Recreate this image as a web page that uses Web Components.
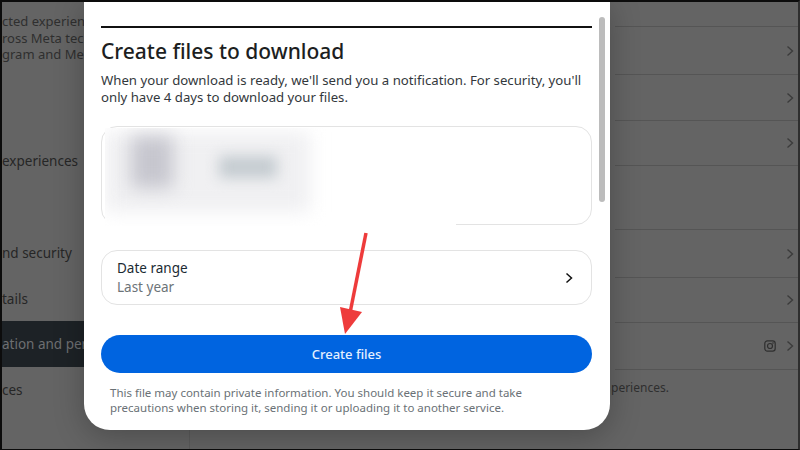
<!DOCTYPE html>
<html lang="en">
  <head>
    <meta charset="UTF-8" />
    <title>Create files to download</title>
    <style>
      html, body {
        margin: 0;
        height: 100%;
        overflow: hidden;
        background: #000;
      }
      body {
        font-family: "Noto Sans", "Liberation Sans", sans-serif;
      }
    </style>
  </head>
  <body>
    <template id="settings-page">
      <style>
        :host {
          display: block;
          position: relative;
          box-sizing: border-box;
          width: 800px;
          height: 450px;
          border-top: 2px solid #0c0c0c;
          border-left: 2px solid #0c0c0c;
          border-right: 2px solid #2e2e2e;
          border-bottom: 1px solid #0c0c0c;
          overflow: hidden;
          background: #646464;
        }
        .columns {
          display: grid;
          grid-template-columns: 188px 1fr;
          height: 100%;
        }
        .side {
          border-right: 1px solid #5b5b5b;
        }
      </style>
      <div class="columns">
        <div class="side"><slot name="side"></slot></div>
        <div><slot name="main"></slot></div>
      </div>
      <slot></slot>
    </template>

    <template id="side-item">
      <style>
        :host {
          display: flex;
          align-items: center;
          height: var(--h, 46px);
          margin-top: var(--top, 0);
          white-space: nowrap;
          font-size: 13.5px;
          color: #262626;
        }
        :host([selected]) {
          background: #1d2226;
          color: #6d6f71;
        }
      </style>
      <slot></slot>
    </template>

    <template id="side-intro">
      <style>
        :host {
          display: block;
          padding-top: 11px;
          height: 100px;
          box-sizing: border-box;
          white-space: nowrap;
          font-size: 13px;
          line-height: 16.5px;
          color: #2f2f2f;
        }
      </style>
      <slot></slot>
    </template>

    <template id="settings-row">
      <style>
        :host {
          display: flex;
          align-items: center;
          justify-content: flex-end;
          gap: 8px;
          box-sizing: border-box;
          height: var(--h, 47px);
          margin-left: 425px;
          padding-right: 2px;
          border-bottom: 1px solid #555;
        }
        :host([plain]) svg {
          display: none;
        }
        svg {
          width: 12px;
          height: 12px;
          fill: none;
          stroke: #3c3c3c;
          stroke-width: 1.4;
        }
      </style>
      <slot></slot>
      <svg viewBox="0 0 12 12"><path d="M3.5 1.5 8.5 6 3.5 10.5" /></svg>
    </template>

    <template id="insta-glyph">
      <style>
        :host {
          display: block;
          width: 12px;
          height: 12px;
        }
        svg {
          display: block;
          fill: none;
          stroke: #2f2f2f;
          stroke-width: 1.2;
        }
        circle.dot {
          fill: #2f2f2f;
          stroke: none;
        }
      </style>
      <svg viewBox="0 0 12 12" width="12" height="12">
        <rect x="0.8" y="0.8" width="10.4" height="10.4" rx="2.6" />
        <circle cx="6" cy="6" r="2.5" />
        <circle class="dot" cx="9" cy="3" r="0.8" />
      </svg>
    </template>

    <template id="row-note">
      <style>
        :host {
          display: block;
          margin-left: 421px;
          padding-top: 9px;
          white-space: nowrap;
          font-size: 12px;
          color: #2f2f2f;
        }
      </style>
      <slot></slot>
    </template>

    <template id="download-modal">
      <style>
        :host {
          position: absolute;
          left: 82px;
          top: -2px;
          box-sizing: border-box;
          width: 526px;
          height: 430px;
          padding: 26px 18px 0 17px;
          background: #fff;
          border-radius: 0 0 26px 26px;
          box-shadow: 0 6px 30px rgba(0, 0, 0, 0.25);
          color: #1c2b33;
        }
        .rule {
          height: 2px;
          background: #111;
        }
        .bar {
          position: absolute;
          left: 515px;
          top: 17px;
          width: 6px;
          height: 185px;
          border-radius: 3px;
          background: #bcbcbc;
        }
        h1 {
          margin: 8px 0 0;
          font-size: 21px;
          line-height: 30px;
          font-weight: 500;
          color: #1c1e21;
        }
        p {
          margin: 6px 0 0;
          font-size: 13.2px;
          line-height: 17px;
          color: #33383c;
        }
        ::slotted(account-card) {
          margin-top: 20px;
        }
        ::slotted(date-range) {
          margin-top: 25px;
        }
        ::slotted(primary-button) {
          margin-top: 30px;
        }
        small {
          display: block;
          margin: 12px 60px 0 9px;
          font-size: 11.5px;
          line-height: 15px;
          color: #6a7176;
        }
      </style>
      <div class="rule"></div>
      <div class="bar"></div>
      <h1><slot name="title"></slot></h1>
      <p><slot name="lead"></slot></p>
      <slot></slot>
      <small><slot name="foot"></slot></small>
    </template>

    <template id="account-card">
      <style>
        :host {
          display: block;
          position: relative;
          box-sizing: border-box;
          height: 99px;
          border: 1px solid #e3e3e3;
          border-radius: 16px;
          background: #fff;
        }
        .smear {
          position: absolute;
          left: 3px;
          top: 1px;
          width: 351px;
          height: 98px;
          overflow: hidden;
          background: #fff;
        }
        .wash {
          position: absolute;
          left: 0;
          top: 4px;
          width: 205px;
          height: 80px;
          background: #f0f0f2;
          filter: blur(9px);
        }
        .one {
          position: absolute;
          left: 26px;
          top: 8px;
          width: 42px;
          height: 52px;
          background: #c6c6ce;
          filter: blur(9px);
        }
        .two {
          position: absolute;
          left: 114px;
          top: 28px;
          width: 58px;
          height: 22px;
          background: #c4cbd0;
          filter: blur(7px);
        }
      </style>
      <div class="smear">
        <div class="wash"></div>
        <div class="one"></div>
        <div class="two"></div>
      </div>
    </template>

    <template id="date-range">
      <style>
        :host {
          display: flex;
          align-items: center;
          box-sizing: border-box;
          height: 55px;
          padding: 0 15px;
          border: 1px solid #e3e3e3;
          border-radius: 16px;
        }
        div {
          flex: 1;
        }
        b {
          display: block;
          font-weight: 400;
          font-size: 13.5px;
          line-height: 19px;
          color: #1c2b33;
        }
        span {
          display: block;
          font-size: 13.5px;
          line-height: 19px;
          color: #6c7378;
        }
        svg {
          width: 12px;
          height: 12px;
          margin-right: 1px;
          fill: none;
          stroke: #111;
          stroke-width: 1.5;
        }
      </style>
      <div>
        <b><slot name="label"></slot></b>
        <span><slot name="value"></slot></span>
      </div>
      <svg viewBox="0 0 12 12"><path d="M3.5 1.5 8.5 6 3.5 10.5" /></svg>
    </template>

    <template id="primary-button">
      <style>
        :host {
          display: flex;
          align-items: center;
          justify-content: center;
          height: 38px;
          border-radius: 19px;
          background: #0064e0;
          color: #e4f0ff;
          font-size: 13px;
          font-weight: 500;
        }
      </style>
      <slot></slot>
    </template>

    <template id="red-arrow">
      <style>
        :host {
          position: absolute;
          left: 336px;
          top: 229px;
          width: 34px;
          height: 104px;
        }
        svg {
          display: block;
        }
      </style>
      <svg width="34" height="104" viewBox="0 0 34 104">
        <path d="M28 2 12 82" stroke="#ee3b3b" stroke-width="3.5" fill="none" />
        <path d="M2 76 24 81 7 103Z" fill="#ee3b3b" />
      </svg>
    </template>

    <settings-page>
      <div slot="side">
        <side-intro>
          <div>cted experien</div>
          <div>ross Meta tec</div>
          <div>gram and Me</div>
        </side-intro>
        <side-item style="--h:118px">experiences</side-item>
        <side-item style="--top:10px">nd security</side-item>
        <side-item style="--h:45px">tails</side-item>
        <side-item selected>ation and per</side-item>
        <side-item>ces</side-item>
      </div>
      <div slot="main">
        <settings-row plain style="--h:25px"></settings-row>
        <settings-row style="--h:48px"></settings-row>
        <settings-row style="--h:46px"></settings-row>
        <settings-row style="--h:45px"></settings-row>
        <settings-row plain style="--h:64px"></settings-row>
        <settings-row style="--h:48px"></settings-row>
        <settings-row style="--h:45px"></settings-row>
        <settings-row style="--h:47px"><insta-glyph></insta-glyph></settings-row>
        <row-note>periences.</row-note>
      </div>
      <download-modal>
        <span slot="title">Create files to download</span>
        <span slot="lead">When your download is ready, we'll send you a notification. For security, you'll only have 4 days to download your files.</span>
        <account-card></account-card>
        <date-range>
          <span slot="label">Date range</span>
          <span slot="value">Last year</span>
        </date-range>
        <primary-button>Create files</primary-button>
        <span slot="foot">This file may contain private information. You should keep it secure and take precautions when storing it, sending it or uploading it to another service.</span>
      </download-modal>
      <red-arrow></red-arrow>
    </settings-page>

    <script>
      // every element just clones its template into an open shadow root
      const names = [
        'settings-page',
        'side-item',
        'side-intro',
        'settings-row',
        'insta-glyph',
        'row-note',
        'download-modal',
        'account-card',
        'date-range',
        'primary-button',
        'red-arrow',
      ];

      names.forEach((name) => {
        const tmp = document.querySelector('#' + name).content;
        customElements.define(
          name,
          class extends HTMLElement {
            constructor() {
              super();
              this.attachShadow({ mode: 'open' }).appendChild(tmp.cloneNode(true));
            }
          }
        );
      });
    </script>
  </body>
</html>
